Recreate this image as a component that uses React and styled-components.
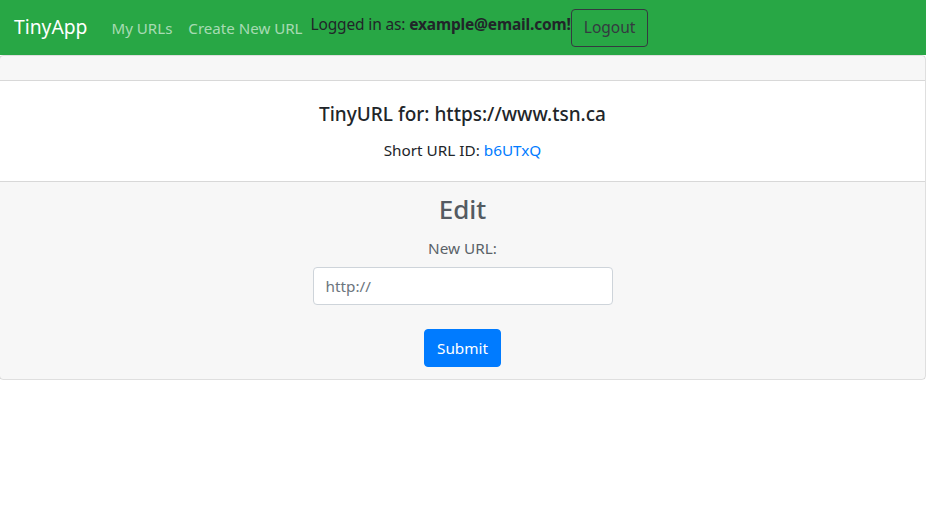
import React from "react";
import styled, { createGlobalStyle } from "styled-components";

const Global = createGlobalStyle`
  body {
    margin: 0;
    background: #fff;
    color: #212529;
    font-family: "Noto Sans", "Open Sans", sans-serif;
    font-size: 16px;
    line-height: 1.5;
  }
  * { box-sizing: border-box; }
`;

/**
 * Navbar
 */
const Nav = styled.nav`
  height: 55px;
  padding: 8px 16px 8px 14px;
  display: flex;
  flex-direction: row;
  align-items: center;
  background-color: #28a745;
  font-size: 15.5px;
`;
const Brand = styled.a`
  margin-right: 16px;
  font-size: 19.3px;
  color: #fff;
  text-decoration: none;
  white-space: nowrap;
`;
const NavLink = styled.a`
  padding: 0 8px;
  font-size: 15.1px;
  color: rgba(255, 255, 255, 0.6);
  text-decoration: none;
  white-space: nowrap;
  margin-top: 2px;
`;
const LoggedIn = styled.span`
  align-self: flex-start;
  margin-top: 5px;
  color: #212529;
  white-space: nowrap;
  letter-spacing: -0.15px;
  b { font-weight: 700; }
`;
const OutlineButton = styled.button`
  height: 38px;
  padding: 6px 12px;
  border: 1px solid #343a40;
  border-radius: 4px;
  background: transparent;
  color: #343a40;
  font: inherit;
  font-size: 15.5px;
  margin-top: 1px;
`;

/**
 * Card
 */
const Card = styled.div`
  margin-left: -1px;
  width: calc(100% + 1px);
  border: 1px solid rgba(0, 0, 0, 0.125);
  border-radius: 4px;
  text-align: center;
`;
const CardHeader = styled.div`
  height: 25px;
  background-color: rgba(0, 0, 0, 0.03);
  border-bottom: 1px solid rgba(0, 0, 0, 0.125);
`;
const CardBody = styled.div`
  padding: 21px 20px 19px;
  h5 {
    margin: 0 0 12px;
    font-size: 19px;
    font-weight: 500;
    line-height: 24px;
  }
  p {
    margin: 0;
    font-size: 15.3px;
    line-height: 24px;
  }
  a {
    color: #007bff;
    text-decoration: none;
  }
`;
const CardFooter = styled.div`
  padding: 11px 20px 12px;
  background-color: rgba(0, 0, 0, 0.03);
  border-top: 1px solid rgba(0, 0, 0, 0.125);
  color: #5a6268;
  h3 {
    margin: 0 0 11px;
    font-size: 26px;
    font-weight: 500;
    line-height: 32px;
    color: #545b62;
  }
`;
const Form = styled.form`
  display: flex;
  flex-direction: column;
  align-items: center;
  font-size: 15.3px;
  line-height: 24px;
  label {
    display: block;
    margin-bottom: 7px;
  }
`;
const Input = styled.input`
  width: 300px;
  height: 38px;
  padding: 6px 12px;
  border: 1px solid #ced4da;
  border-radius: 4px;
  background: #fff;
  font: inherit;
  color: #495057;
  margin-bottom: 24px;
  &::placeholder { color: #6c757d; }
`;
const Button = styled.button`
  height: 38px;
  padding: 6px 12px;
  border: 1px solid #007bff;
  border-radius: 4px;
  background-color: #007bff;
  color: #fff;
  font: inherit;
`;

export default function App() {
  return (
    <>
      <Global />
      <Nav>
        <Brand href="#">TinyApp</Brand>
        <NavLink href="#">My URLs</NavLink>
        <NavLink href="#">Create New URL</NavLink>
        <LoggedIn>
          Logged in as: <b>example@email.com!</b>
        </LoggedIn>
        <OutlineButton>Logout</OutlineButton>
      </Nav>
      <Card>
        <CardHeader />
        <CardBody>
          <h5>TinyURL for: https://www.tsn.ca</h5>
          <p>
            Short URL ID: <a href="#">b6UTxQ</a>
          </p>
        </CardBody>
        <CardFooter>
          <h3>Edit</h3>
          <Form onSubmit={(e) => e.preventDefault()}>
            <label>New URL:</label>
            <Input type="text" placeholder="http://" />
            <Button type="submit">Submit</Button>
          </Form>
        </CardFooter>
      </Card>
    </>
  );
}
